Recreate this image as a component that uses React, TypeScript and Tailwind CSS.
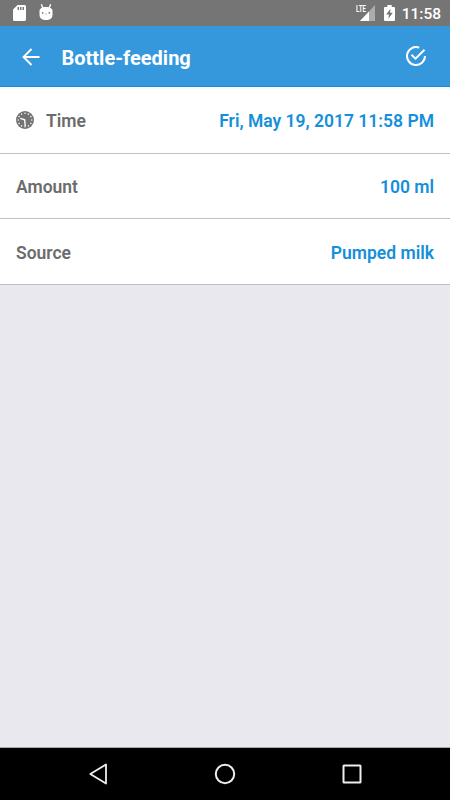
import type { ReactNode } from "react";

type RowProps = {
  label: string;
  value: string;
  icon?: ReactNode;
  className: string;
};

const clockTicks = [0, 30, 60, 90, 120, 150, 180, 210, 240, 270, 300, 330];

function StatusBar() {
  return (
    <div className="flex h-[26px] shrink-0 items-center justify-between bg-[#757575] pr-[9px] pl-[13px] text-white">
      <div className="flex items-center gap-[13px]">
        <svg width="13" height="16" viewBox="0 0 13 16">
          <path d="M4.6 0H11.5C12.4 0 13 .6 13 1.5V14.5C13 15.4 12.4 16 11.5 16H1.5C.6 16 0 15.4 0 14.5V4.6Z" fill="white" />
          <path d="M5.3 2V5M7.8 2V5M10.3 2V5" stroke="#757575" strokeWidth="1.4" />
        </svg>
        <svg width="14" height="17" viewBox="0 0 14 17" className="relative -top-px">
          <path d="M2.5.8 3.9 4M11.5.8 10.1 4" stroke="white" strokeWidth="1.4" strokeLinecap="round" />
          <path d="M.5 7C.5 4.5 3.2 3 7 3s6.5 1.5 6.5 4v4c0 3-2.5 5-6.5 5S.5 14 .5 11Z" fill="white" />
          <circle cx="3.7" cy="8.8" r=".9" fill="#757575" />
          <circle cx="10.3" cy="8.8" r=".9" fill="#757575" />
          <path d="m6.2 9.7.8.6.8-.6" fill="none" stroke="#aaa" strokeWidth=".8" />
        </svg>
      </div>
      <div className="flex items-center">
        <div className="relative mr-[9px] h-4 w-[19px]">
          <svg width="19" height="16" viewBox="0 0 19 16">
            <path d="M19 0V16H4Z" fill="#acacac" />
            <path d="M13 6.4V16H4Z" fill="white" />
          </svg>
          <span className="absolute top-[-1px] left-0 origin-left scale-x-[0.68] bg-[#757575] text-[9px] leading-[10px] font-bold">LTE</span>
        </div>
        <svg width="11" height="16" viewBox="0 0 11 17" preserveAspectRatio="none" className="mr-[7px]">
          <path d="M3.3 0H7.7V2H10Q11 2 11 3V16Q11 17 10 17H1Q0 17 0 16V3Q0 2 1 2H3.3Z" fill="white" />
          <path d="M6.5 4 2.2 10H5L4.4 14.5 8.8 8.3H6Z" fill="#757575" />
        </svg>
        <span className="relative top-px text-[15.5px] leading-5 font-medium">11:58</span>
      </div>
    </div>
  );
}

function Header() {
  return (
    <header className="flex h-[61px] shrink-0 items-center border-b border-[#148fda] bg-[#3598dc] pr-6 pl-[22px] text-white">
      <button type="button" aria-label="Back" className="relative top-[0.5px]">
        <svg width="18" height="18" viewBox="0 0 18 18" fill="none" stroke="white" strokeWidth="1.9">
          <path d="M9.5 1 1.5 9l8 8M1.5 9H17.5" />
        </svg>
      </button>
      <h1 className="relative top-0.5 ml-[21.5px] text-[20px] leading-6 font-bold">Bottle-feeding</h1>
      <button type="button" aria-label="Save" className="ml-auto">
        <svg width="20" height="20" viewBox="0 0 20 20" fill="none" stroke="white" strokeWidth="2" className="mb-px">
          <path d="M13.2 1.6A9 9 0 1 0 19 10" />
          <path d="m5.5 8.7 4 4 9-9" />
        </svg>
      </button>
    </header>
  );
}

function ClockIcon() {
  return (
    <svg width="18" height="18" viewBox="0 0 18 18" className="relative -top-px mr-3">
      <circle cx="9" cy="9" r="9" fill="#737373" />
      {clockTicks.map((angle) => (
        <circle key={angle} cx="9" cy="2.2" r=".75" fill="white" transform={`rotate(${angle} 9 9)`} />
      ))}
      <path d="M4.3 7.3 8.7 8.8 9.2 15" fill="none" stroke="white" strokeWidth="1.4" />
    </svg>
  );
}

function Row({ label, value, icon, className }: RowProps) {
  return (
    <div className={`flex items-center border-b border-[#c0c0c0] bg-white px-4 text-[17.5px] leading-6 font-semibold ${className}`}>
      {icon}
      <span className="text-[#6c6c6c]">{label}</span>
      <span className="ml-auto text-[#168fda]">{value}</span>
    </div>
  );
}

function NavigationBar() {
  return (
    <nav className="flex h-[53px] shrink-0 items-center justify-between border-t border-[#aaa] bg-black pr-[88px] pl-[89px]">
      <svg width="19" height="22" viewBox="0 0 19 22" fill="none" stroke="#eee" strokeWidth="1.8" strokeLinejoin="round">
        <path d="M17 1.5V20.5L1.3 11Z" />
      </svg>
      <svg width="22" height="22" viewBox="0 0 22 22" fill="none" stroke="#eee" strokeWidth="2">
        <circle cx="11" cy="11" r="9.2" />
      </svg>
      <svg width="20" height="20" viewBox="0 0 20 20" fill="none" stroke="#eee" strokeWidth="2">
        <rect x="1.5" y="1.5" width="17" height="17" rx=".5" />
      </svg>
    </nav>
  );
}

export default function App() {
  return (
    <div className="flex h-[800px] w-[450px] flex-col overflow-hidden bg-[#e8e8ee] font-[Roboto,sans-serif]">
      <StatusBar />
      <Header />
      <main className="flex-1">
        <Row label="Time" value="Fri, May 19, 2017 11:58 PM" icon={<ClockIcon />} className="h-[67px] pt-0.5" />
        <Row label="Amount" value="100 ml" className="h-[65px] pt-0.5" />
        <Row label="Source" value="Pumped milk" className="h-[66px] pt-0.5" />
      </main>
      <NavigationBar />
    </div>
  );
}
